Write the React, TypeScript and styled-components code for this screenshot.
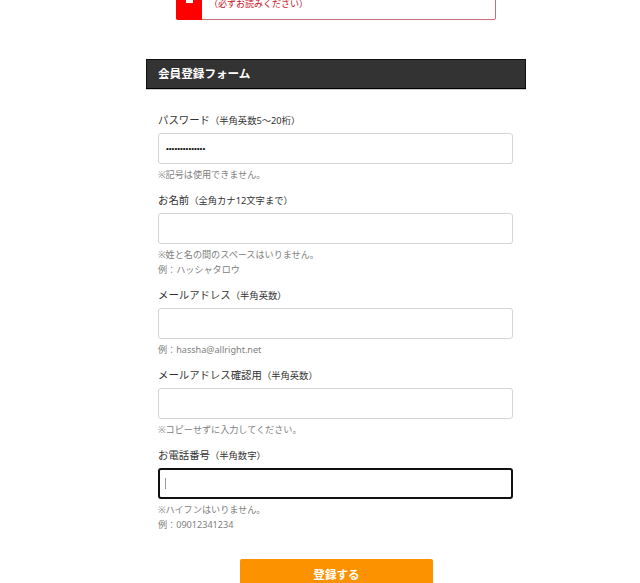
import { createGlobalStyle } from 'styled-components'
import styled from 'styled-components'

const GlobalStyle = createGlobalStyle`
  html, body {
    margin: 0;
    padding: 0;
    height: 583px;
    overflow: hidden;
    background: #fff;
    font-family: "Noto Sans", "Noto Sans CJK JP", sans-serif;
  }
`

const Page = styled.div`
  width: 640px;
  height: 583px;
  overflow: hidden;
`

const Notice = styled.a`
  display: flex;
  box-sizing: border-box;
  width: 320px;
  height: 40px;
  margin: -20px 0 0 176px;
  border: 1px solid #cf6b76;
  border-radius: 2px;
  position: relative;
  background: #fff;
`

const NoticeMark = styled.div`
  width: 26px;
  margin: -1px 0 -1px -1px;
  background: #fe0000;
  border-radius: 2px 0 0 2px;
  display: flex;
  justify-content: center;
  align-items: flex-end;
  padding-bottom: 17px;
`

const NoticeBar = styled.span`
  width: 7px;
  height: 3px;
  background: #fff;
`

const NoticeText = styled.div`
  padding: 16px 0 0 7px;
  font-size: 9px;
  line-height: 14px;
  color: #c9101c;
`

const NoticeArrow = styled.svg`
  position: absolute;
  right: 7px;
  top: 13px;
  width: 8px;
  height: 10px;
`

const Form = styled.form`
  width: 380px;
  margin: 39px 0 0 146px;
`

const FormTitle = styled.h2`
  box-sizing: border-box;
  height: 30px;
  margin: 0;
  padding-left: 11px;
  background: #333;
  border: 1px solid #111;
  border-bottom-color: #000;
  box-shadow: 0 1px 0 #ccc;
  color: #fff;
  font-size: 11.6px;
  font-weight: 700;
  line-height: 27px;
`

const Fields = styled.div`
  display: flex;
  flex-direction: column;
  gap: 9px;
  margin: 22px 13px 0 12px;
`

const Field = styled.div`
  display: flex;
  flex-direction: column;
`

const Label = styled.label`
  height: 16px;
  margin-bottom: 6px;
  color: #333;
  font-size: 10.4px;
  line-height: 18px;
`

const Small = styled.span`
  font-size: 9.3px;
`

const InputWrap = styled.div`
  position: relative;
  height: 31px;
`

const Input = styled.input<{ $focused?: boolean }>`
  box-sizing: border-box;
  display: block;
  width: 100%;
  height: 100%;
  padding: 0 7px;
  background: #fff;
  border: ${(p) => (p.$focused ? '2px solid #111' : '1px solid #d5d5d5')};
  border-radius: 3px;
  outline: none;
  font-size: 8px;
  color: #111;
  font-family: "Liberation Sans", sans-serif;
`

const Caret = styled.span`
  position: absolute;
  left: 7px;
  top: 10px;
  width: 1px;
  height: 11px;
  background: #999;
`

const Note = styled.p`
  margin: 4px 0 0;
  color: #808080;
  font-size: 9.1px;
  line-height: 14px;

  & + & {
    margin-top: 1px;
  }
`

const Submit = styled.button`
  display: block;
  width: 193px;
  height: 40px;
  margin: 27px 0 0 94px;
  padding: 0 0 10px;
  background: #fd9200;
  border: 0;
  border-radius: 2px;
  color: #fff;
  font-family: inherit;
  font-size: 11.6px;
  font-weight: 700;
`

const fields = [
  { label: 'パスワード', hint: '（半角英数5～20桁）', value: 'aaaaaaaaaaaaaa', type: 'password', notes: ['※記号は使用できません。'] },
  { label: 'お名前', hint: '（全角カナ12文字まで）', notes: ['※姓と名の間のスペースはいりません。', '例：ハッシャタロウ'] },
  { label: 'メールアドレス', hint: '（半角英数）', notes: ['例：hassha@allright.net'] },
  { label: 'メールアドレス確認用', hint: '（半角英数）', notes: ['※コピーせずに入力してください。'] },
  { label: 'お電話番号', hint: '（半角数字）', focused: true, notes: ['※ハイフンはいりません。', '例：09012341234'] },
]

export default function App() {
  return (
    <Page>
      <GlobalStyle />
      <Notice>
        <NoticeMark>
          <NoticeBar />
        </NoticeMark>
        <NoticeText>（必ずお読みください）</NoticeText>
        <NoticeArrow viewBox="0 0 8 10">
          <path d="M1 4 L6 0" stroke="#c8525f" fill="none" />
        </NoticeArrow>
      </Notice>
      <Form>
        <FormTitle>会員登録フォーム</FormTitle>
        <Fields>
          {fields.map((f) => (
            <Field key={f.label}>
              <Label>
                {f.label}
                <Small>{f.hint}</Small>
              </Label>
              <InputWrap>
                <Input
                  type={f.type ?? 'text'}
                  defaultValue={f.value}
                  $focused={f.focused}
                  aria-label={f.label}
                />
                {f.focused && <Caret />}
              </InputWrap>
              {f.notes.map((n) => (
                <Note key={n}>{n}</Note>
              ))}
            </Field>
          ))}
        </Fields>
        <Submit type="button">登録する</Submit>
      </Form>
    </Page>
  )
}
